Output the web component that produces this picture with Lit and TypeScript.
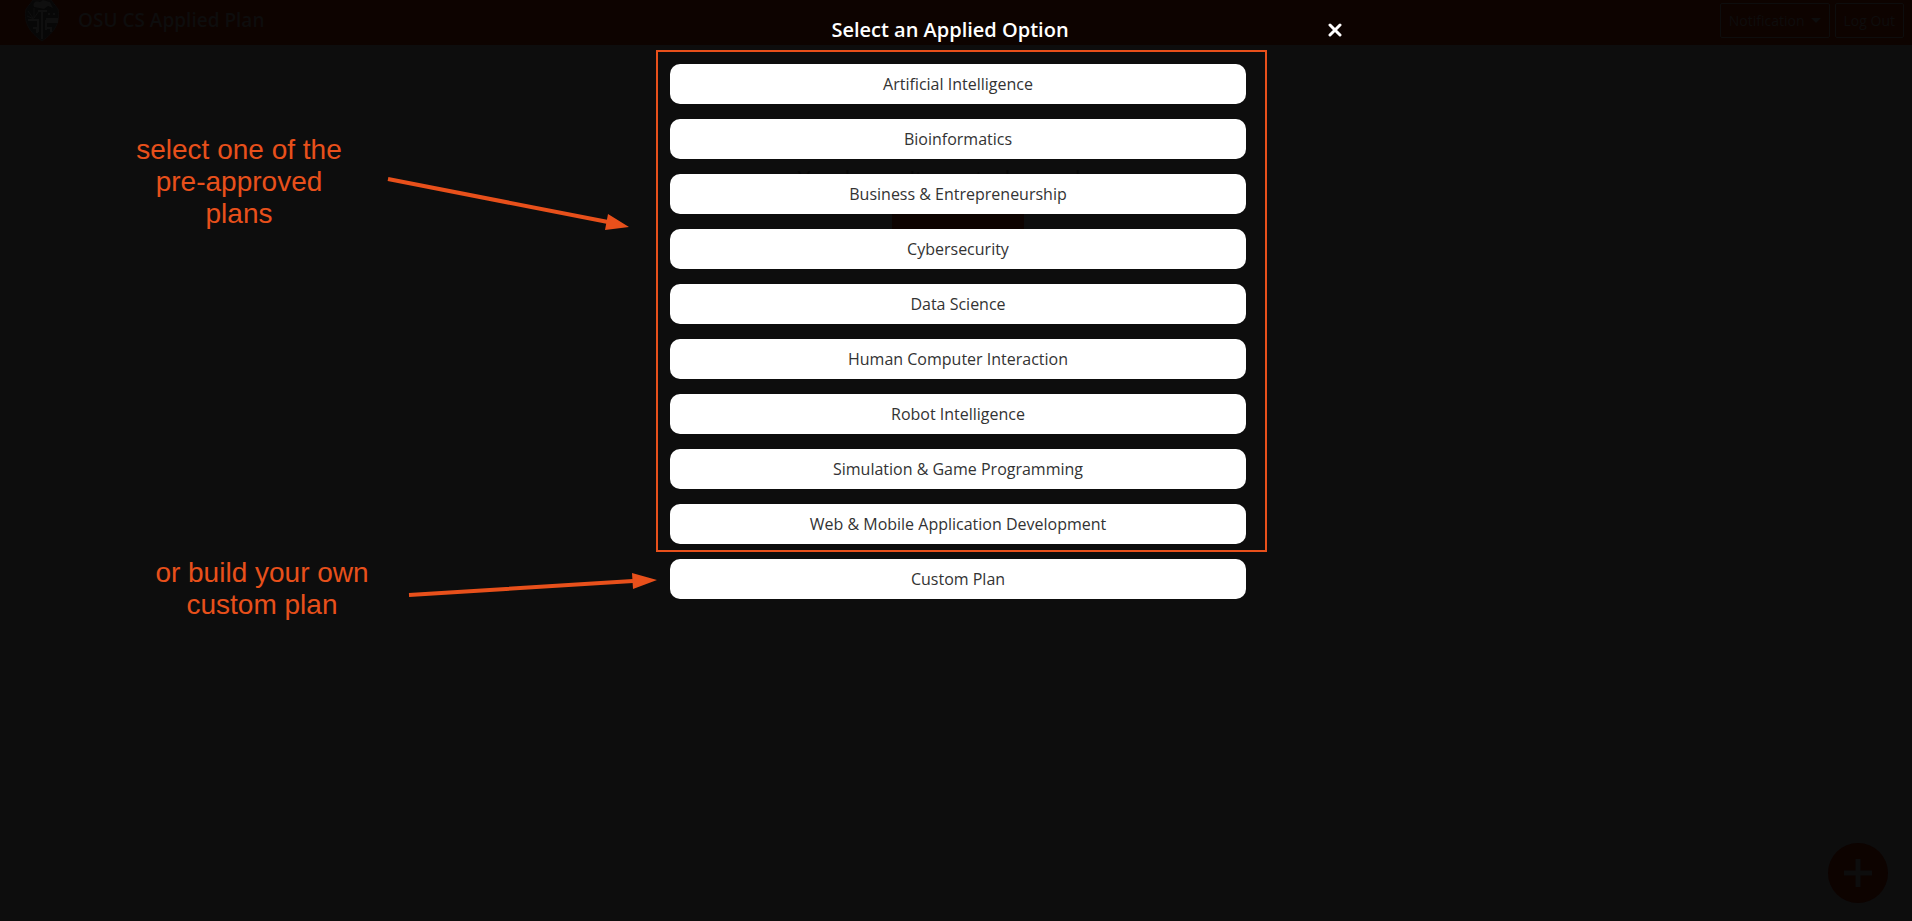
import { LitElement, html, css, svg } from "lit";
import { customElement, state } from "lit/decorators.js";

const PRE_APPROVED = [
  "Artificial Intelligence",
  "Bioinformatics",
  "Business & Entrepreneurship",
  "Cybersecurity",
  "Data Science",
  "Human Computer Interaction",
  "Robot Intelligence",
  "Simulation & Game Programming",
  "Web & Mobile Application Development",
];

@customElement("nav-bar")
class NavBar extends LitElement {
  static styles = css`
    :host {
      display: flex;
      align-items: flex-start;
      height: 45px;
      padding: 0 8px 0 24px;
      box-sizing: border-box;
      background: #0d0300;
      color: #0d0d0d;
    }
    .crest {
      width: 36px;
      height: 42px;
      flex: none;
    }
    .brand {
      flex: 1;
      margin: 0 0 0 18px;
      font-size: 19px;
      font-weight: 600;
      line-height: 40px;
    }
    .actions {
      display: flex;
      gap: 5px;
      padding-top: 3px;
    }
    .action {
      display: flex;
      align-items: center;
      gap: 6px;
      height: 35px;
      padding: 0 8px;
      border: 1px solid #0d0d0d;
      border-radius: 2px;
      background: none;
      color: inherit;
      font: inherit;
      font-size: 14px;
    }
    .caret {
      width: 10px;
      height: 5px;
    }
  `;

  render() {
    return html`
      <svg class="crest" viewBox="0 0 36 42" aria-hidden="true">
        <path d="M9 0h18l7 9c3 13-4 24-16 32C6 33-1 22 2 9z" fill="#070707" stroke="#0c0b0b" />
        <path d="M10 7c-2-4 2-7 6-5l3-2 7 2 3 6-5-2-4 3z" fill="#0f0f0f" />
        <path d="M4 20h11M14 11h9M18 11v28M14 20v12M22 20v10M9 28h4v5M23 28h4v4" fill="none" stroke="#0f0f0f" stroke-width="2" />
        <path d="M10 18V8M9 18L4 11M10 18l5-7M3 16l7 3" fill="none" stroke="#0f0f0f" />
        <path d="M22 18h12v5H22zM24 13h2v2h-2zM29 13h2v2h-2z" fill="#0f0f0f" />
      </svg>
      <h1 class="brand">OSU CS Applied Plan</h1>
      <div class="actions">
        <button class="action" type="button">
          Notification
          <svg class="caret" viewBox="0 0 10 5" aria-hidden="true"><path d="M0 0h10L5 5z" fill="#0d0d0d" /></svg>
        </button>
        <button class="action" type="button">Log Out</button>
      </div>
    `;
  }
}

@customElement("app-root")
class AppRoot extends LitElement {
  @state() private selected = "";

  static styles = css`
    :host {
      display: block;
      position: relative;
      min-height: 100vh;
      background: #0d0d0d;
      font-family: "Open Sans", "Noto Sans", sans-serif;
      overflow: hidden;
    }
    .empty {
      display: flex;
      flex-direction: column;
      align-items: center;
      gap: 8px;
      padding: 116px 0 0 4px;
      color: #070707;
      font-size: 23px;
      line-height: 36px;
    }
    .empty-text {
      margin: 0;
    }
    .create {
      width: 132px;
      height: 32px;
      border: 0;
      background: #0d0300;
    }
    .add {
      position: absolute;
      right: 24px;
      bottom: 18px;
      display: grid;
      place-items: center;
      width: 60px;
      height: 60px;
      padding: 0;
      border: 0;
      border-radius: 50%;
      background: #0d0300;
    }
    .add-icon {
      width: 28px;
      height: 28px;
    }
    .overlay {
      position: absolute;
      inset: 0;
      padding: 16px 0 0 4px;
    }
    .dialog {
      width: 576px;
      margin: 0 auto;
    }
    .header {
      position: relative;
      color: #fff;
    }
    .title {
      margin: 0 16px 0 0;
      text-align: center;
      font-size: 20px;
      font-weight: 600;
      line-height: 28px;
    }
    .close {
      position: absolute;
      right: -96px;
      top: 7px;
      width: 14px;
      height: 14px;
      padding: 0;
      border: 0;
      background: none;
    }
    .close-icon {
      display: block;
      width: 14px;
      height: 14px;
    }
    .options {
      display: flex;
      flex-direction: column;
      gap: 15px;
      margin-top: 20px;
    }
    .group {
      display: flex;
      flex-direction: column;
      gap: 15px;
      position: relative;
    }
    .frame {
      position: absolute;
      inset: -14px -21px -8px -14px;
      border: 2px solid #e8501b;
      pointer-events: none;
    }
    .option {
      height: 40px;
      border: 0;
      border-radius: 10px;
      background: #fff;
      color: #333;
      font: inherit;
      font-size: 16px;
      line-height: 24px;
    }
    .notes {
      position: absolute;
      inset: 0;
      pointer-events: none;
      color: #e8501b;
      font-family: "Liberation Sans", Arial, sans-serif;
      font-size: 28px;
      line-height: 32px;
      text-align: center;
    }
    .note {
      position: absolute;
      margin: 0;
      width: 240px;
    }
    .note-approved {
      left: 119px;
      top: 134px;
    }
    .note-custom {
      left: 142px;
      top: 557px;
    }
    .arrows {
      position: absolute;
      left: 0;
      top: 0;
      width: 680px;
      height: 640px;
    }
  `;

  private option(name: string) {
    return html`<button class="option" type="button" @click=${() => (this.selected = name)}>${name}</button>`;
  }

  render() {
    return html`
      <nav-bar></nav-bar>
      <main class="empty">
        <p class="empty-text">You haven't created any plans</p>
        <button class="create" type="button" aria-label="Create a plan"></button>
      </main>
      <button class="add" type="button" aria-label="Add plan">
        <svg class="add-icon" viewBox="0 0 28 28"><path d="M14 0v28M0 14h28" stroke="#0d0d0d" stroke-width="5" /></svg>
      </button>
      <div class="overlay">
        <section class="dialog" role="dialog" aria-labelledby="title">
          <header class="header">
            <h2 class="title" id="title">Select an Applied Option</h2>
            <button class="close" type="button" aria-label="Close">
              <svg class="close-icon" viewBox="0 0 14 14"><path d="M2 2l10 10M12 2L2 12" stroke="#fff" stroke-width="3" stroke-linecap="round" /></svg>
            </button>
          </header>
          <div class="options">
            <div class="group">
              ${PRE_APPROVED.map((name) => this.option(name))}
              <div class="frame"></div>
            </div>
            ${this.option("Custom Plan")}
          </div>
        </section>
      </div>
      <div class="notes">
        <p class="note note-approved">select one of the<br />pre-approved<br />plans</p>
        <p class="note note-custom">or build your own<br />custom plan</p>
        <svg class="arrows" viewBox="0 0 680 640" aria-hidden="true">
          ${svg`
            <path d="M388 179L608 222M409 595L633 581" stroke="#e8501b" stroke-width="4" fill="none" />
            <path d="M608 214L629 227L605 230zM632 573L657 580L633 589z" fill="#e8501b" />
          `}
        </svg>
      </div>
    `;
  }
}
